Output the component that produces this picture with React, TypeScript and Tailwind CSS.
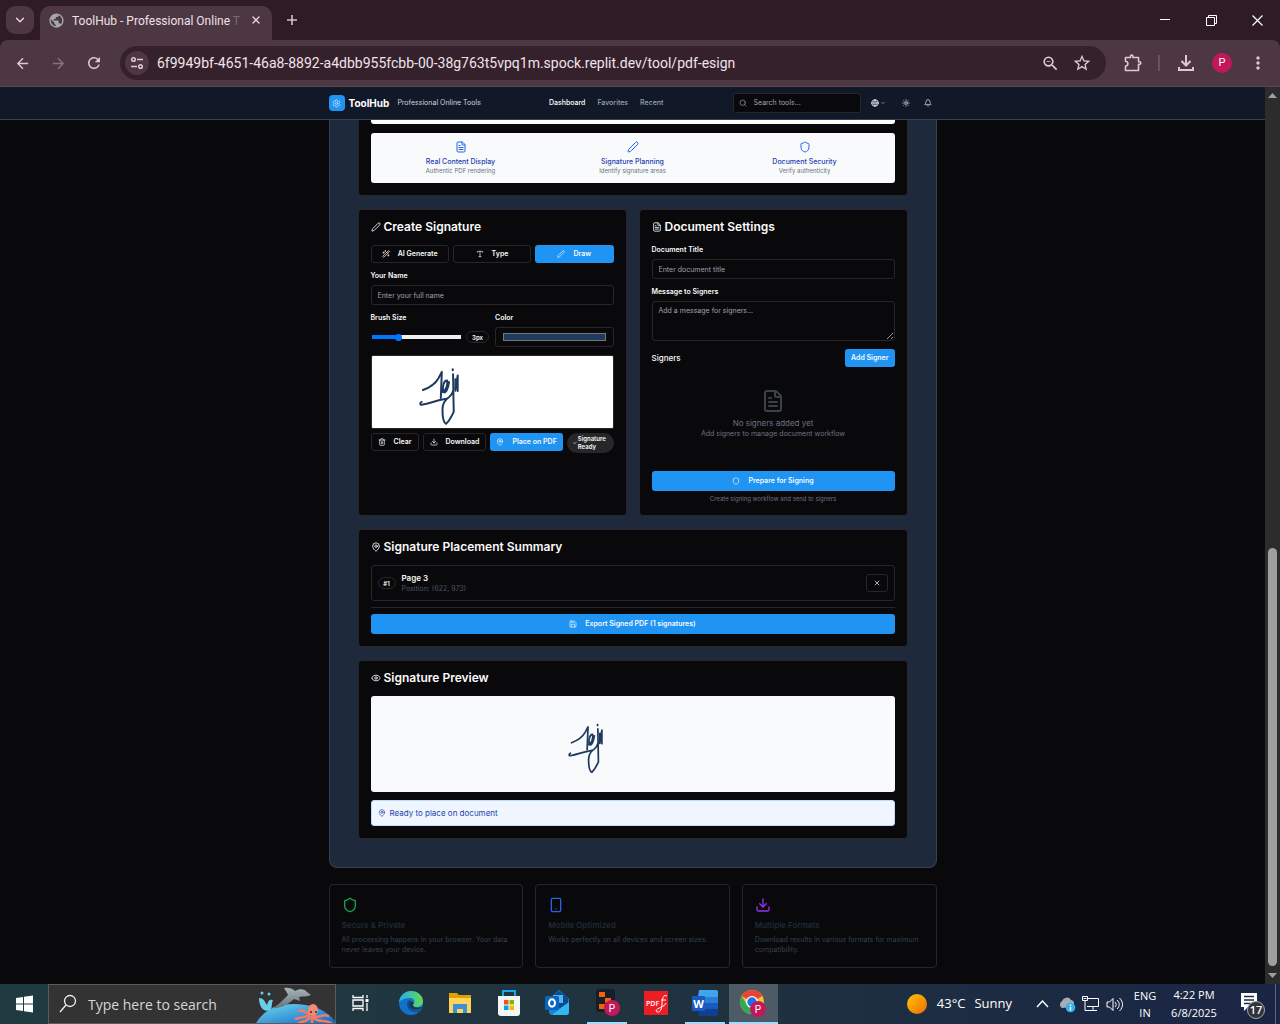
import React from "react";
import {
  Bell, Check, ChevronDown, Download, Eye, FileText, Globe, MapPin, Pen, Save, Search,
  Settings, Shield, Smartphone, Sun, Trash2, Type, WandSparkles, X,
} from "lucide-react";
import { MdArrowBack, MdArrowForward, MdMoreVert, MdPublic, MdRefresh, MdStarBorder, MdZoomOut } from "react-icons/md";

const outline =
  "flex items-center justify-center gap-2 rounded-[3px] border border-[#27272a] bg-[#09090b] text-[7px] font-semibold text-[#fafafa]";
const primary =
  "flex items-center justify-center gap-2 rounded-[3px] bg-[#2094f3] text-[7px] font-semibold text-[#f8fafc]";
const field =
  "block w-full rounded-[3px] border border-[#27272a] bg-[#09090b] px-[6px] text-[7px] text-[#fafafa] placeholder:text-[#a1a1aa]";
const label = "block text-[7px] font-semibold leading-[10px] text-[#fafafa]";

function SignatureMark({ className }: { className: string }) {
  return (
    <svg viewBox="190 62 130 180" className={className} fill="none" stroke="#1e3a5f" strokeWidth="6" strokeLinecap="round" strokeLinejoin="round" aria-label="Signature">
      <path d="M205 134C226 126 244 112 252 98L262 79L259 158" />
      <path d="M201 170C194 174 196 181 204 178C226 175 242 165 276 160" />
      <path d="M263 140C275 136 281 118 278 105C268 104 263 124 266 140C275 146 281 128 284 110" />
      <path d="M296 86L298 200C292 213 284 228 275 236C265 231 264 214 264 194C263 172 274 162 284 155C293 148 296 140 298 128" />
      <path d="M303 101V136L310 90V137" />
      <path d="M295 71V74" />
    </svg>
  );
}

function TitleBar() {
  return (
    <div className="flex h-10 shrink-0 bg-[#2e1b26] text-[#e9d9e2]">
      <button aria-label="Search tabs" className="ml-[6px] mt-[6px] flex h-7 w-7 items-center justify-center rounded-[9px] bg-[#4c3743]">
        <ChevronDown size={14} strokeWidth={2.4} />
      </button>
      <div className="ml-[6px] mt-[6px] flex w-[232px] items-center rounded-t-[10px] bg-[#4c3743] pl-2 pr-[10px]">
        <MdPublic size={17} className="mb-[6px] text-[#a3a7aa]" />
        <span className="mb-[5px] ml-[7px] whitespace-nowrap font-['Roboto',sans-serif] text-[12px] text-[#eee1e8]">
          ToolHub - Professional Online <span className="text-[#7b6672]">T</span>
        </span>
        <button aria-label="Close tab" className="mb-[6px] ml-auto"><X size={12} strokeWidth={2.6} /></button>
      </div>
      <button aria-label="New tab" className="ml-[13px] text-[#d9bccb]">
        <svg width="14" height="14" viewBox="0 0 14 14" stroke="currentColor" strokeWidth="1.6"><path d="M7 2v10M2 7h10" /></svg>
      </button>
      <div className="ml-auto flex text-white">
        <button aria-label="Minimize" className="flex w-[46px] items-center justify-center"><svg width="10" height="10"><path d="M0 4.500h10" stroke="currentColor" /></svg></button>
        <button aria-label="Restore" className="flex w-[46px] items-center justify-center"><svg width="11" height="11" fill="none" stroke="currentColor"><path d="M.5 2.500h8v8h-8zM2.500 2.500v-2h8v8h-2" /></svg></button>
        <button aria-label="Close" className="flex w-[46px] items-center justify-center"><svg width="11" height="11" stroke="currentColor" strokeWidth="1.200"><path d="M.5.5l10 10M10.500.5l-10 10" /></svg></button>
      </div>
    </div>
  );
}

function Toolbar() {
  return (
    <div className="bg-[#2e1b26]">
      <div className="flex h-[47px] shrink-0 items-center rounded-t-[8px] border-b border-[#5a4751] bg-[#4c3743] pl-[14px] pr-3 text-[#e3c5d3]">
        <button aria-label="Back"><MdArrowBack size={17} /></button>
        <button aria-label="Forward" className="ml-[19px] text-[#8b7280]"><MdArrowForward size={17} /></button>
        <button aria-label="Reload" className="ml-[18px]"><MdRefresh size={18} /></button>
        <div className="ml-[17px] flex h-[34px] flex-1 items-center rounded-full bg-[#35212c] pl-[5px] pr-[14px]">
          <button aria-label="Site information" className="flex h-6 w-6 items-center justify-center rounded-full bg-[#4c3743]">
            <svg width="14" height="14" viewBox="0 0 14 14" fill="none" stroke="currentColor" strokeWidth="1.500"><circle cx="3.500" cy="3.500" r="1.800" /><path d="M7 3.500h6M1 10.500h6" /><circle cx="10.500" cy="10.500" r="1.800" /></svg>
          </button>
          <input aria-label="Address" readOnly defaultValue="6f9949bf-4651-46a8-8892-a4dbb955fcbb-00-38g763t5vpq1m.spock.replit.dev/tool/pdf-esign" className="ml-2 min-w-0 flex-1 bg-transparent font-['Roboto',sans-serif] text-[14px] text-[#f0e3ea] outline-none" />
          <button aria-label="Zoom"><MdZoomOut size={19} /></button>
          <button aria-label="Bookmark" className="ml-3"><MdStarBorder size={20} /></button>
        </div>
        <button aria-label="Extensions" className="ml-[17px]">
          <svg width="20" height="20" viewBox="0 0 20 20" fill="none" stroke="currentColor" strokeWidth="1.600" strokeLinejoin="round"><path d="M2.500 4.500h5V3.200a1.200 1.200 0 0 1 2.400 0v1.300h5.600v4.300h1a1.300 1.300 0 0 1 0 2.600h-1v6.100h-13v-4.300c3.200-.6 3.200-4.400 0-5z" /></svg>
        </button>
        <span className="ml-[15px] h-4 w-[2px] bg-[#6b515f]" />
        <button aria-label="Downloads" className="ml-[17px]">
          <svg width="18" height="18" viewBox="0 0 18 18" fill="none" stroke="currentColor" strokeWidth="2"><path d="M9 1v10M4.500 7L9 11.500 13.500 7M2 13v3h14v-3" /></svg>
        </button>
        <button aria-label="Profile" className="ml-[17px] flex h-5 w-5 items-center justify-center rounded-full bg-[#c2185b] font-['Roboto',sans-serif] text-[11px] text-white">P</button>
        <button aria-label="Menu" className="ml-4"><MdMoreVert size={20} /></button>
      </div>
    </div>
  );
}

function SiteHeader() {
  return (
    <header className="shrink-0 border-b border-[#374151] bg-[#111827]">
      <div className="mx-auto flex h-8 w-full max-w-[640px] items-center px-4">
        <span className="flex h-4 w-4 items-center justify-center rounded-[4px] bg-[#2094f3] text-white"><Settings size={9} strokeWidth={1.500} /></span>
        <span className="ml-1 text-[10px] font-bold text-white">ToolHub</span>
        <span className="ml-2 text-[7px] text-[#d1d5db]">Professional Online Tools</span>
        <nav className="ml-[68px] flex gap-3 text-[7px] font-medium text-[#9ca3af]">
          <a href="#dashboard" className="text-white">Dashboard</a>
          <a href="#favorites">Favorites</a>
          <a href="#recent">Recent</a>
        </nav>
        <label className="ml-auto flex h-5 w-[128px] items-center gap-[7px] rounded-[3px] border border-[#27272a] bg-[#09090b] px-[5px] text-[#9ca3af]">
          <Search size={8} />
          <input aria-label="Search tools" placeholder="Search tools..." className="min-w-0 flex-1 bg-transparent pt-px text-[7px] outline-none placeholder:text-[#a1a1aa]" />
        </label>
        <button aria-label="Language" className="ml-[10px] flex items-center gap-[1px] text-[#d1d5db]"><Globe size={8} strokeWidth={3} /><ChevronDown size={6} /></button>
        <button aria-label="Theme" className="ml-4 text-[#d1d5db]"><Sun size={8} strokeWidth={2.4} /></button>
        <button aria-label="Notifications" className="ml-[14px] mr-[5px] text-[#d1d5db]"><Bell size={8} strokeWidth={2.4} /></button>
      </div>
    </header>
  );
}

function Card({ title, icon, children }: { title: string; icon: React.ReactNode; children: React.ReactNode }) {
  return (
    <section className="flex flex-col rounded-[4px] border border-[#27272a] bg-[#09090b] px-3 pb-3 pt-[10px]">
      <h2 className="mb-3 flex h-[13px] items-center gap-[3px] text-[12px] font-semibold text-[#fafafa]">{icon}{title}</h2>
      {children}
    </section>
  );
}

function Info({ icon, title, text }: { icon: React.ReactNode; title: string; text: string }) {
  return (
    <div className="flex flex-col items-center text-[#2563eb]">
      {icon}
      <span className="mt-1 text-[7px] font-medium leading-[10px] text-[#1e40af]">{title}</span>
      <span className="text-[6px] leading-[8px] text-[#6b7280]">{text}</span>
    </div>
  );
}

function CreateSignature() {
  return (
    <Card title="Create Signature" icon={<Pen size={10} />}>
      <div className="grid h-[18px] grid-cols-3 gap-1">
        <button className={outline}><WandSparkles size={8} />AI Generate</button>
        <button className={outline}><Type size={8} />Type</button>
        <button className={primary}><Pen size={8} />Draw</button>
      </div>
      <label htmlFor="name" className={label + " mt-2"}>Your Name</label>
      <input id="name" placeholder="Enter your full name" className={field + " mt-1 h-5"} />
      <div className="mt-2 grid grid-cols-2 gap-[6px]">
        <div>
          <label htmlFor="brush" className={label}>Brush Size</label>
          <div className="mt-1 flex h-5 items-center gap-[5px]">
            <input id="brush" type="range" min={1} max={8} defaultValue={3} className="ml-[1px] h-1 min-w-0 flex-1 appearance-none bg-gradient-to-r from-[#0075ff] from-28% to-[#efefef] to-28% [&::-webkit-slider-thumb]:h-[7px] [&::-webkit-slider-thumb]:w-[7px] [&::-webkit-slider-thumb]:appearance-none [&::-webkit-slider-thumb]:rounded-full [&::-webkit-slider-thumb]:bg-[#0075ff]" />
            <span className="flex h-3 w-[23px] items-center justify-center rounded-full border border-[#27272a] text-[6px] font-semibold text-[#fafafa]">3px</span>
          </div>
        </div>
        <div>
          <label htmlFor="color" className={label}>Color</label>
          <input id="color" type="color" defaultValue="#1e3a5f" className="mt-1 block h-5 w-full rounded-[3px] border border-[#27272a] bg-[#09090b] px-[7px] py-[5px] [&::-webkit-color-swatch-wrapper]:p-0 [&::-webkit-color-swatch]:border-[#777777]" />
        </div>
      </div>
      <div className="mt-2 h-[74px] rounded-[2px] border border-[#27272a] bg-white pl-[46px] pt-[10px]">
        <SignatureMark className="h-[60px] w-[43px]" />
      </div>
      <div className="mt-1 flex items-start gap-1">
        <button className={outline + " h-[18px] px-[6px]"}><Trash2 size={8} />Clear</button>
        <button className={outline + " h-[18px] px-[6px]"}><Download size={8} />Download</button>
        <button className={primary + " h-[18px] px-[6px]"}><MapPin size={8} />Place on PDF</button>
        <span className="flex h-5 min-w-0 flex-1 items-center gap-[1px] rounded-full bg-[#27272a] pl-[6px] text-[6px] font-semibold leading-[8px] text-[#fafafa]"><Check size={4} strokeWidth={4} className="shrink-0" />Signature<br />Ready</span>
      </div>
    </Card>
  );
}

function DocumentSettings() {
  return (
    <Card title="Document Settings" icon={<FileText size={10} />}>
      <label htmlFor="title" className={label}>Document Title</label>
      <input id="title" placeholder="Enter document title" className={field + " mt-1 h-5"} />
      <label htmlFor="message" className={label + " mt-2"}>Message to Signers</label>
      <textarea id="message" placeholder="Add a message for signers..." className={field + " mt-1 h-10 resize-y py-1"} />
      <div className="mt-2 flex h-[18px] items-center justify-between">
        <h3 className="text-[8px] font-medium text-[#fafafa]">Signers</h3>
        <button className={primary + " h-[18px] px-[6px]"}>Add Signer</button>
      </div>
      <div className="flex h-[104px] flex-col items-center pt-[22px] text-[#6b7280]">
        <FileText size={24} className="text-[#3b4049]" />
        <p className="mt-[5px] text-[8px] leading-[11px]">No signers added yet</p>
        <p className="text-[7px] leading-[10px]">Add signers to manage document workflow</p>
      </div>
      <button className={primary + " h-5 w-full"}><Shield size={8} />Prepare for Signing</button>
      <p className="mt-1 text-center text-[6px] leading-[8px] text-[#6b7280]">Create signing workflow and send to signers</p>
    </Card>
  );
}

const features = [
  { title: "Secure & Private", text: "All processing happens in your browser. Your data never leaves your device.", icon: <Shield size={16} className="text-[#16a34a]" /> },
  { title: "Mobile Optimized", text: "Works perfectly on all devices and screen sizes.", icon: <Smartphone size={16} className="text-[#2563eb]" /> },
  { title: "Multiple Formats", text: "Download results in various formats for maximum compatibility.", icon: <Download size={16} className="text-[#9333ea]" /> },
];

function Page() {
  return (
    <div className="flex min-w-0 flex-1 flex-col overflow-hidden bg-[#09090b] font-['Inter',sans-serif]">
      <SiteHeader />
      <main className="mx-auto w-full max-w-[640px] px-4">
        <div className="flex flex-col gap-[13px] rounded-b-[8px] border border-t-0 border-[#374151] bg-[#1e293b] px-7 pb-7">
          <section className="rounded-b-[4px] border border-t-0 border-[#27272a] bg-[#09090b] px-3 pb-3">
            <div className="h-1 rounded-b-[3px] bg-white" />
            <div className="mt-[9px] grid h-[50px] grid-cols-3 rounded-[3px] bg-[#f8fafc] px-1 pt-2">
              <Info icon={<FileText size={12} />} title="Real Content Display" text="Authentic PDF rendering" />
              <Info icon={<Pen size={12} />} title="Signature Planning" text="Identify signature areas" />
              <Info icon={<Shield size={12} />} title="Document Security" text="Verify authenticity" />
            </div>
          </section>
          <div className="grid grid-cols-2 gap-3">
            <CreateSignature />
            <DocumentSettings />
          </div>
          <Card title="Signature Placement Summary" icon={<MapPin size={10} />}>
            <div className="flex h-9 items-center rounded-[3px] border border-[#27272a] px-[6px]">
              <span className="flex h-3 w-[18px] items-center justify-center rounded-full border border-[#27272a] text-[6px] font-semibold text-[#fafafa]">#1</span>
              <div className="ml-[6px]">
                <p className="text-[8px] font-semibold leading-[11px] text-[#fafafa]">Page 3</p>
                <p className="text-[7px] leading-[10px] text-[#4b5563]">Position: (622, 973)</p>
              </div>
              <button aria-label="Remove placement" className={outline + " ml-auto h-[18px] w-[22px]"}><X size={8} /></button>
            </div>
            <div className="mt-[6px] border-t border-[#27272a] pt-[6px]">
              <button className={primary + " h-5 w-full"}><Save size={8} />Export Signed PDF (1 signatures)</button>
            </div>
          </Card>
          <Card title="Signature Preview" icon={<Eye size={10} />}>
            <div className="flex h-24 items-center justify-center rounded-[3px] bg-[#f8fafc] pr-[94px] pt-2">
              <SignatureMark className="h-[52px] w-[38px]" />
            </div>
            <p className="mt-2 flex h-[26px] items-center gap-1 rounded-[3px] border border-[#bfdbfe] bg-[#eff6ff] px-[6px] text-[8px] text-[#1e40af]"><MapPin size={8} />Ready to place on document</p>
          </Card>
        </div>
        <div className="mt-4 grid grid-cols-3 gap-3">
          {features.map((f) => (
            <article key={f.title} className="h-[84px] rounded-[4px] border border-[#27272a] px-3 pt-3">
              {f.icon}
              <h3 className="mt-[7px] text-[8px] font-semibold leading-[11px] text-[#1f2937]">{f.title}</h3>
              <p className="mt-1 text-[7px] leading-[10px] text-[#334155]">{f.text}</p>
            </article>
          ))}
        </div>
      </main>
    </div>
  );
}

function Scrollbar() {
  return (
    <div className="flex w-[15px] shrink-0 flex-col items-center justify-between bg-[#2c2c2c] py-[6px]" aria-hidden="true">
      <svg width="9" height="5"><path d="M4.500 0L9 5H0z" fill="#9f9f9f" /></svg>
      <span className="mb-[7px] mt-auto h-[418px] w-[9px] rounded-full bg-[#9f9f9f]" />
      <svg width="9" height="5"><path d="M0 0h9L4.500 5z" fill="#9f9f9f" /></svg>
    </div>
  );
}

function Task({ name, active, open, children }: { name: string; active?: boolean; open?: boolean; children: React.ReactNode }) {
  return (
    <button aria-label={name} className={"flex w-[49px] shrink-0 flex-col items-center " + (active ? "bg-[#4d5b67]" : "")}>
      <span className="flex h-[37px] items-center">{children}</span>
      <span className={"mt-[1px] h-[2px] " + (active ? "w-full bg-[#9ddcff]" : open ? "w-10 bg-[#9ddcff]" : "w-0")} />
    </button>
  );
}

function Taskbar() {
  return (
    <footer className="flex h-10 shrink-0 bg-gradient-to-r from-[#203a42] via-[#20333f] to-[#1a2544] font-['Open_Sans',sans-serif] text-white">
      <button aria-label="Start" className="flex w-12 shrink-0 items-center justify-center">
        <svg width="17" height="18" viewBox="0 0 17 18" fill="white"><path d="M0 3l7-1v6.500H0zM8 1.800L17 .5v8H8zM0 9.500h7V16l-7-1zM8 9.500h9v8l-9-1.300z" /></svg>
      </button>
      <label className="flex w-[288px] items-center border border-[#5b5b5b] bg-[#333333] pl-[10px]">
        <svg width="18" height="20" viewBox="0 0 18 20" fill="none" stroke="#f0f0f0" strokeWidth="1.300"><circle cx="11" cy="7" r="5.500" /><path d="M7 11L1 18" /></svg>
        <input aria-label="Type here to search" placeholder="Type here to search" className="ml-[11px] min-w-0 flex-1 bg-transparent text-[14px] outline-none placeholder:text-[#d6d6d6]" />
        <svg width="79" height="38" viewBox="0 0 79 38" className="shrink-0">
          <defs><linearGradient id="sea" x2="1" y2="1"><stop stopColor="#72d9ef" /><stop offset="1" stopColor="#1268c8" /></linearGradient><linearGradient id="dolphin" x2="0" y2="1"><stop stopColor="#a9b4ba" /><stop offset="1" stopColor="#66747c" /></linearGradient></defs>
          <path d="M0 38C8 25 20 19 38 19C56 19 70 25 79 36V38z" fill="url(#sea)" />
          <path d="M15 23C21 22 27 15 32 10C31 7 29 5 28 3C33 2 37 4 39 6C44 3 49 4 51 7L55 10C51 12 47 11 43 12L44 16L38 14C32 19 26 24 15 23z" fill="url(#dolphin)" />
          <path d="M3 13c5 0 5 3 8 7 1-5 3-6 6-5-2 4 0 7-3 10C8 28 3 22 3 13z" fill="#69cdec" /><circle cx="6" cy="8" r="1.500" fill="#69cdec" /><circle cx="13" cy="9" r="1.500" fill="#69cdec" />
          <g fill="none" stroke="#f27b63" strokeWidth="2.500" strokeLinecap="round"><path d="M53 30C48 34 44 31 40 34M54 32C50 38 45 36 43 38M58 31C63 34 67 28 72 31M58 33C63 38 69 34 75 38M56 32v6M52 28c-4 0-5-4-9-2" /></g>
          <ellipse cx="57" cy="25" rx="5" ry="6" fill="#f58a70" /><circle cx="55" cy="27" r="1" fill="#50222a" /><circle cx="60" cy="27" r="1" fill="#50222a" />
        </svg>
      </label>
      <Task name="Task view"><svg width="17" height="18" viewBox="0 0 17 18" fill="none" stroke="white" strokeWidth="1.300"><path d="M1 1v2.500h10V1M1 17v-2.500h10V17M1 6h10v6H1zM15 1v3M15 9v8" /><path d="M13.500 5h3v3h-3z" fill="white" stroke="none" /></svg></Task>
      <div className="ml-px flex shrink-0">
        <Task name="Edge"><svg width="24" height="24" viewBox="0 0 24 24"><defs><linearGradient id="edge" x2="1"><stop stopColor="#25aee6" /><stop offset="1" stopColor="#62d957" /></linearGradient></defs><circle cx="12" cy="12" r="12" fill="#1272ca" /><path d="M0 11C1 4 6 0 12 0c7 0 12 5 12 10 0 4-3 6-6 6-4 0-5-2-3-4 1-3-1-5-4-5C6 7 2 9 0 11z" fill="url(#edge)" /><path d="M9 10c-3 6 2 12 10 11 1 0 2-1 3-2-5 2-13 0-11-6 0-1 1-2 2-2-1-2-3-2-4-1z" fill="#0b4b9c" /><path d="M15 12c-3 3 1 6 7 4l1 1c-6 4-15 1-12-5 1-2 3-1 4 0z" fill="#203840" /></svg></Task>
        <Task name="File Explorer"><svg width="22" height="22" viewBox="0 0 22 22"><path d="M0 1h8l2 2h12v8H0z" fill="#e0a000" /><path d="M0 6h22v15H0z" fill="#ffd45c" /><path d="M4 21v-9h14v9h-4v-4H8v4z" fill="#3b91d4" /></svg></Task>
        <Task name="Microsoft Store"><svg width="24" height="28" viewBox="0 0 24 28"><path d="M6 9V2h12v7" fill="none" stroke="#18a7ec" strokeWidth="2" /><path d="M1 7h22v17a3 3 0 0 1-3 3H4a3 3 0 0 1-3-3z" fill="#f5f5f5" /><path d="M7 11h4.500v4.500H7z" fill="#f25022" /><path d="M12.500 11H17v4.500h-4.500z" fill="#7fba00" /><path d="M7 16.500h4.500V21H7z" fill="#00a4ef" /><path d="M12.500 16.500H17V21h-4.500z" fill="#ffb900" /></svg></Task>
        <Task name="Outlook"><svg width="25" height="27" viewBox="0 0 25 27"><path d="M4 10L14 1l10 9v13a3 3 0 0 1-3 3H6l-2-2z" fill="#1784d8" /><path d="M6 8l8-6 9 7v5l-8 5-9-5z" fill="#0b4b8d" /><path d="M8 6h10v8H8z" fill="#50b5ee" /><path d="M8 25L24 13v10a3 3 0 0 1-3 3H8z" fill="#34b6f2" /><rect y="7" width="14" height="14" rx="1.500" fill="#0966bd" /><ellipse cx="7" cy="14" rx="3" ry="3.700" fill="none" stroke="white" strokeWidth="2" /></svg></Task>
        <Task name="Replit" open><svg width="26" height="28" viewBox="0 0 26 28"><rect x="2" width="19" height="23" rx="3" fill="#171d2a" /><path d="M5 3h6v5H5zM11 9h6v5h-6zM5 15h6v5H5z" fill="#f26207" /><circle cx="18" cy="19" r="8" fill="#c2185b" /><text x="18" y="22.500" textAnchor="middle" fontSize="10" fill="white" fontFamily="Roboto">P</text></svg></Task>
        <Task name="PDF reader"><svg width="24" height="24" viewBox="0 0 24 24"><path d="M0 0h24v24H0z" fill="#ee1c25" /><text x="2" y="15" fontSize="7" fontWeight="600" fill="white" fontFamily="Open Sans">PDF</text><path d="M23 5c-3-2-5 2-5 8 0 7-4 10-6 7 0-3 9-4 10-8M17 9h5" fill="none" stroke="white" strokeWidth="1" /></svg></Task>
        <Task name="Word" open><svg width="26" height="26" viewBox="0 0 26 26"><path d="M7 0h17a2 2 0 0 1 2 2v5H6z" fill="#41a5ee" /><path d="M6 7h20v6H6z" fill="#2b7cd3" /><path d="M6 13h20v6H6z" fill="#185abd" /><path d="M6 19h20v5a2 2 0 0 1-2 2H7z" fill="#103f91" /><rect y="6" width="13" height="15" rx="1" fill="#185abd" /><text x="6.500" y="17.500" textAnchor="middle" fontSize="11" fontWeight="700" fill="white" fontFamily="Open Sans">W</text></svg></Task>
        <Task name="Chrome" active><svg width="27" height="32" viewBox="0 -2 27 32"><circle cx="12" cy="13" r="12" fill="#fbc02d" /><path d="M12 13L1.600 7A12 12 0 0 1 22.400 7z" fill="#ea4335" /><path d="M1.600 7A12 12 0 0 0 12 25l5-9H7z" fill="#34a853" /><circle cx="12" cy="13" r="6" fill="white" /><circle cx="12" cy="13" r="4.700" fill="#1a73e8" /><circle cx="18" cy="20" r="8" fill="#c2185b" /><text x="18" y="23.500" textAnchor="middle" fontSize="10" fill="white" fontFamily="Roboto">P</text></svg></Task>
      </div>
      <div className="ml-auto flex shrink-0 items-center">
        <span className="h-5 w-5 rounded-full bg-gradient-to-br from-[#ffc400] to-[#ee6b00]" />
        <span className="ml-[10px] text-[13px]">43°C</span>
        <span className="ml-[9px] text-[13px]">Sunny</span>
        <button aria-label="Show hidden icons" className="ml-6"><svg width="13" height="8" fill="none" stroke="white" strokeWidth="1.400"><path d="M1 7l5.500-6L12 7" /></svg></button>
        <svg width="18" height="18" viewBox="0 0 18 18" className="ml-[9px]"><path d="M4 13a4 4 0 0 1 0-7 5 5 0 0 1 9-1c3 0 4 4 2 7z" fill="#a7adb1" /><circle cx="12.500" cy="12.500" r="4.800" fill="#32b2ec" /><path d="M12.500 9.500v1.500M12.500 12v3.500" stroke="white" strokeWidth="1.500" /></svg>
        <svg width="17" height="16" viewBox="0 0 17 16" fill="none" stroke="white" className="ml-[6px]"><path d="M6 2.500h10.500v8H5M11 10.500v4M7 14.500h8M.5.500h5v4h-5zM3 5v9.500h4M1.500 2.500h3" /></svg>
        <svg width="17" height="15" viewBox="0 0 17 15" fill="none" stroke="white" className="ml-[7px]"><path d="M1 5h2.500L7 1.500v12L3.500 10H1zM9 5c1.500 1.500 1.500 3.500 0 5M11 3c3 3 3 6 0 9M13.500 1c4 4 4 9 0 13" /></svg>
        <div className="ml-[9px] w-[26px] text-center text-[11px] leading-[17px]">ENG<br />IN</div>
        <div className="ml-[11px] w-[50px] whitespace-nowrap text-center text-[11px] leading-[18px]">4:22 PM<br />6/8/2025</div>
        <button aria-label="17 notifications" className="ml-[21px] mr-2">
          <svg width="27" height="32" viewBox="0 0 27 32"><path d="M1 5h16v14H8l-4 4v-4H1z" fill="white" /><path d="M4 8.500h10M4 12h10M4 15.500h7" stroke="#1b2b43" strokeWidth="1.400" /><circle cx="16" cy="22" r="8.500" fill="#30343a" stroke="#a4a8ad" /><text x="16" y="26" fill="white" textAnchor="middle" fontSize="11" fontFamily="Open Sans" fontWeight="600">17</text></svg>
        </button>
        <span className="mr-[4px] h-10 w-px bg-[#5f697c]" />
      </div>
    </footer>
  );
}

export default function App() {
  return (
    <div className="flex h-screen flex-col overflow-hidden bg-[#09090b]">
      <TitleBar />
      <Toolbar />
      <div className="flex min-h-0 flex-1"><Page /><Scrollbar /></div>
      <Taskbar />
    </div>
  );
}
